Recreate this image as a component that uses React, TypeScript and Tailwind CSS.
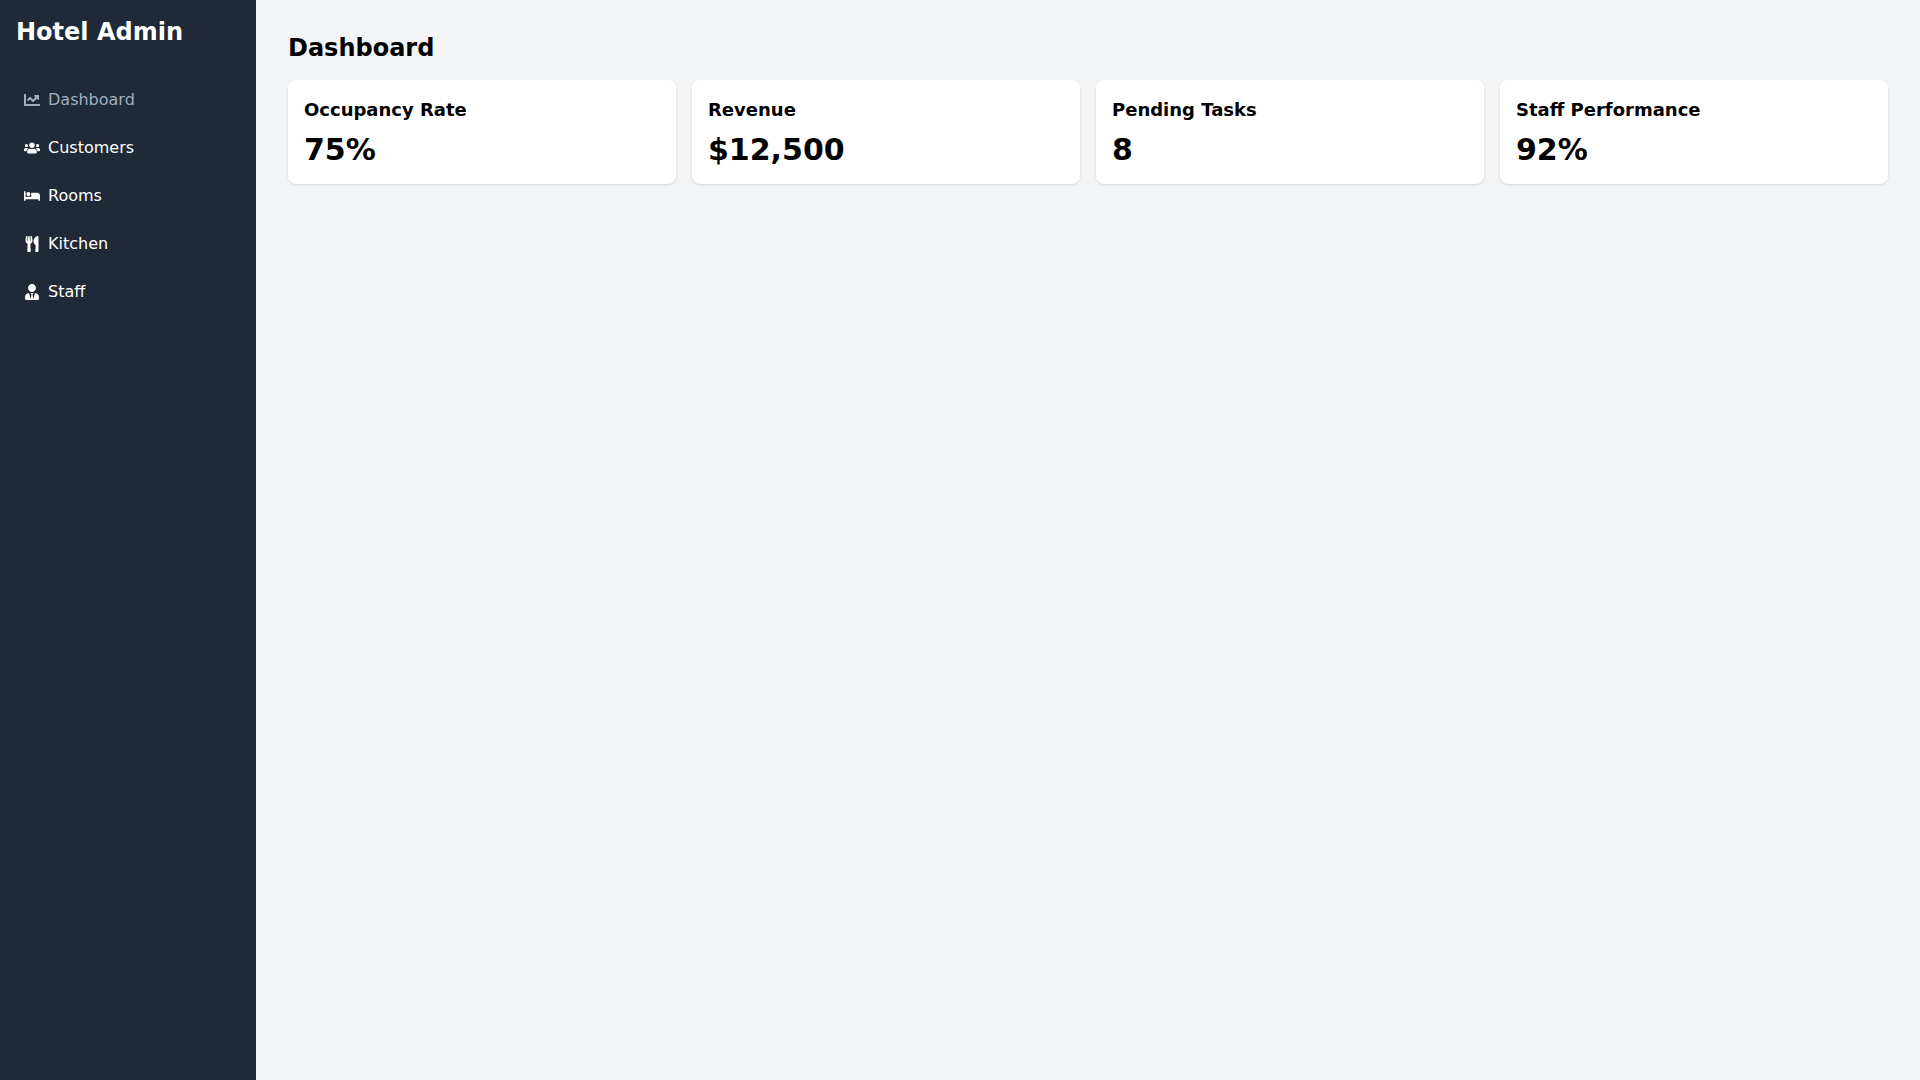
import { FaBed, FaChartLine, FaUsers, FaUserTie, FaUtensils } from "react-icons/fa";
import type { IconType } from "react-icons";

interface NavItem {
  label: string;
  icon: IconType;
  href: string;
}

interface StatCardProps {
  title: string;
  value: string;
}

const navItems: NavItem[] = [
  { label: "Dashboard", icon: FaChartLine, href: "#dashboard" },
  { label: "Customers", icon: FaUsers, href: "#customers" },
  { label: "Rooms", icon: FaBed, href: "#rooms" },
  { label: "Kitchen", icon: FaUtensils, href: "#kitchen" },
  { label: "Staff", icon: FaUserTie, href: "#staff" },
];

const stats: StatCardProps[] = [
  { title: "Occupancy Rate", value: "75%" },
  { title: "Revenue", value: "$12,500" },
  { title: "Pending Tasks", value: "8" },
  { title: "Staff Performance", value: "92%" },
];

const Sidebar = ({ active }: { active: string }) => {
  return (
    <aside className="w-64 shrink-0 bg-[#1f2937] text-white p-4">
      <h2 className="text-2xl font-bold mb-8">Hotel Admin</h2>
      <nav>
        <ul className="space-y-2">
          {navItems.map(({ label, icon: Icon, href }) => (
            <li key={label}>
              <a
                href={href}
                className={`flex items-center gap-2 p-2 ${label === active ? "text-[#a0aec0]" : "text-white"}`}
              >
                <Icon />
                <span>{label}</span>
              </a>
            </li>
          ))}
        </ul>
      </nav>
    </aside>
  );
};

const StatCard = ({ title, value }: StatCardProps) => {
  return (
    <div className="bg-white p-4 rounded-lg shadow-sm">
      <h3 className="text-lg font-bold">{title}</h3>
      <p className="text-3xl font-bold mt-2">{value}</p>
    </div>
  );
};

const App = () => {
  return (
    <div className="flex min-h-screen bg-[#f3f4f6] text-black font-['DejaVu_Sans',sans-serif]">
      <Sidebar active="Dashboard" />
      <main className="flex-1 p-8">
        <h1 className="text-2xl font-bold mb-4">Dashboard</h1>
        <div className="grid grid-cols-1 md:grid-cols-2 lg:grid-cols-4 gap-4">
          {stats.map((stat) => (
            <StatCard key={stat.title} {...stat} />
          ))}
        </div>
      </main>
    </div>
  );
};

export default App;
